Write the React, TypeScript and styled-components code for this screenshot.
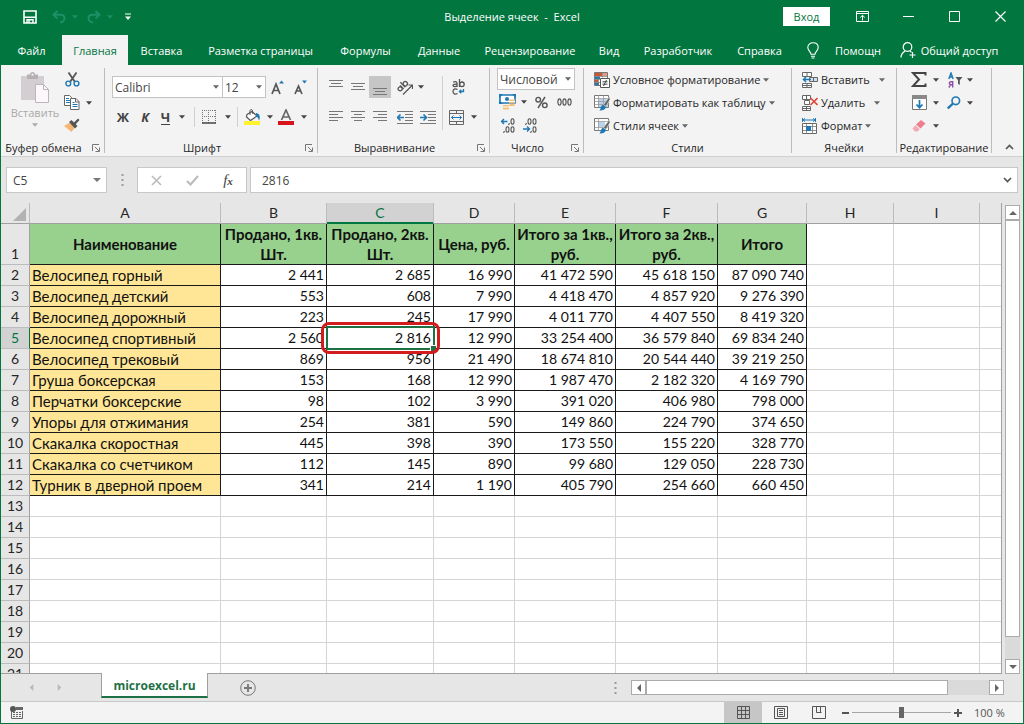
import React from "react";
import styled, { createGlobalStyle, css } from "styled-components";

const green = "#02763f";
const ink = "#262626";
const grey = "#666666";
const blue = "#1e78b4";
const uiFont = '"Open Sans", "Noto Sans", sans-serif';
const cellFont = 'Lato, "Open Sans", sans-serif';

const GlobalStyle = createGlobalStyle`
  *, *::before, *::after { box-sizing: border-box; }
  body { margin: 0; background: #e6e6e6; font-family: ${uiFont}; font-size: 11px; color: ${ink}; }
  button, input, select { font: inherit; color: inherit; margin: 0; }
  svg { display: block; flex: none; }
`;

const Window = styled.div`
  display: flex;
  flex-direction: column;
  height: 100vh;
  border: 1px solid ${green};
  border-top: 0;
  overflow: hidden;
`;

const PlainButton = styled.button`
  display: flex;
  align-items: center;
  justify-content: center;
  flex: none;
  padding: 0;
  border: 0;
  background: none;
  white-space: nowrap;
`;

/* ---------- title bar ---------- */

const TitleBar = styled.header`
  display: grid;
  grid-template-columns: 1fr auto 1fr;
  align-items: center;
  flex: none;
  height: 35px;
  padding-bottom: 2px;
  background: ${green};
  color: #fff;
`;

const QuickAccess = styled.div`
  display: flex;
  align-items: center;
  padding-left: 18px;
  color: #1b9165;
`;

const QuickButton = styled(PlainButton)<{ $w: number; $on?: boolean }>`
  width: ${(p) => p.$w}px;
  height: 24px;
  gap: 6px;
  color: ${(p) => (p.$on ? "#fff" : "inherit")};
`;

const Title = styled.h1`
  margin: 0;
  font-size: 11px;
  font-weight: 400;
  white-space: pre;
`;

const WindowControls = styled.div`
  display: flex;
  align-items: center;
  justify-content: flex-end;
`;

const SignIn = styled(PlainButton)`
  width: 47px;
  height: 19px;
  margin-right: 9px;
  background: #fff;
  color: ${green};
`;

const WindowButton = styled(PlainButton)`
  width: 46px;
  height: 30px;
  color: #fff;
`;

/* ---------- ribbon tabs ---------- */

const TabBar = styled.nav`
  display: flex;
  flex: none;
  height: 30px;
  background: ${green};
  color: #fff;
`;

const RibbonTab = styled(PlainButton)<{ $w: number; $gap?: number; $active?: boolean }>`
  width: ${(p) => p.$w}px;
  gap: ${(p) => p.$gap || 0}px;
  ${(p) =>
    p.$active &&
    css`
      background: #f3f3f3;
      color: ${green};
    `}
`;

/* ---------- ribbon ---------- */

const Ribbon = styled.section`
  display: flex;
  flex: none;
  height: 92px;
  background: #f3f3f3;
  border-bottom: 1px solid #d0d0d0;
`;

const Group = styled.div<{ $w: number }>`
  position: relative;
  display: flex;
  flex-direction: column;
  flex: none;
  width: ${(p) => p.$w}px;
  padding-top: 3px;
  &::after {
    content: "";
    position: absolute;
    top: 3px;
    right: 0;
    bottom: 3px;
    width: 1px;
    background: #bdbdbd;
  }
`;

const GroupBody = styled.div<{ $pad?: string }>`
  display: flex;
  height: 72px;
  padding: ${(p) => p.$pad || "0"};
`;

const GroupLabel = styled.div<{ $launcher?: boolean }>`
  display: flex;
  align-items: center;
  gap: 6px;
  height: 16px;
  padding-right: ${(p) => (p.$launcher ? 5 : 1)}px;
  line-height: 16px;
  white-space: nowrap;
  span {
    flex: 1;
    text-align: center;
  }
`;

const Stack = styled.div<{ $gap?: number; $pad?: string }>`
  display: flex;
  flex-direction: column;
  gap: ${(p) => p.$gap || 0}px;
  padding: ${(p) => p.$pad || "0"};
`;

const Row = styled.div<{ $h?: number }>`
  display: flex;
  align-items: center;
  height: ${(p) => p.$h || 22}px;
`;

const Tool = styled(PlainButton)<{ $w: number; $pressed?: boolean; $gap?: number }>`
  width: ${(p) => p.$w}px;
  height: 22px;
  gap: ${(p) => p.$gap ?? 6}px;
  color: #444;
  background: ${(p) => (p.$pressed ? "#c6c6c6" : "none")};
`;

const Letter = styled.span<{ $kind: "bold" | "italic" | "under" }>`
  font-size: 13px;
  font-weight: 700;
  line-height: 14px;
  font-style: ${(p) => (p.$kind === "italic" ? "italic" : "normal")};
  border-bottom: ${(p) => (p.$kind === "under" ? "1px solid #444" : "0")};
`;

const Rule = styled.div<{ $h: number; $w: number }>`
  flex: none;
  width: ${(p) => p.$w}px;
  height: ${(p) => p.$h}px;
  background: linear-gradient(#d0d0d0, #d0d0d0) center / 1px 100% no-repeat;
`;

const PasteButton = styled(PlainButton)`
  flex-direction: column;
  justify-content: flex-start;
  width: 48px;
  height: 72px;
  padding-top: 4px;
  gap: 2px;
  color: #a9a9a9;
  line-height: 16px;
`;

const TextTool = styled(PlainButton)<{ $gap?: number }>`
  justify-content: flex-start;
  height: 23px;
  color: ${ink};
  svg:first-child {
    margin-right: 3px;
  }
  svg:last-child {
    margin-left: ${(p) => p.$gap || 3}px;
    color: ${grey};
  }
`;

const Combo = styled.label<{ $w: number }>`
  position: relative;
  display: block;
  flex: none;
  width: ${(p) => p.$w}px;
  height: 22px;
  & + & {
    margin-left: -1px;
  }
  svg {
    position: absolute;
    top: 9px;
    right: 4px;
    pointer-events: none;
    color: ${grey};
  }
`;

const ComboSelect = styled.select`
  width: 100%;
  height: 100%;
  padding: 0 2px;
  border: 1px solid #c3c3c3;
  border-radius: 0;
  background: #fff;
  color: #444;
  font-size: 12px;
  appearance: none;
`;

const CollapseButton = styled(PlainButton)`
  align-self: flex-end;
  width: 20px;
  height: 18px;
  margin-left: auto;
  margin-right: 4px;
  color: ${grey};
`;

/* ---------- formula bar ---------- */

const FormulaBar = styled.div`
  display: flex;
  align-items: center;
  flex: none;
  height: 46px;
  padding: 0 5px;
  background: #e6e6e6;
`;

const Field = styled.div<{ $w?: number }>`
  display: flex;
  align-items: center;
  height: 26px;
  border: 1px solid #c8c8c8;
  background: #fff;
  color: #777;
  padding-right: 5px;
  ${(p) => (p.$w ? `flex: none; width: ${p.$w}px;` : "flex: 1; min-width: 0;")}
`;

const FieldInput = styled.input<{ $pad: number }>`
  flex: 1;
  min-width: 0;
  height: 100%;
  padding: 0 0 0 ${(p) => p.$pad}px;
  border: 0;
  outline: 0;
  background: none;
  color: #444;
  font-size: 12px;
`;

const FormulaButtons = styled.div`
  display: flex;
  align-items: center;
  flex: none;
  width: 110px;
  height: 26px;
  margin-right: 3px;
  border: 1px solid #c8c8c8;
  background: #fff;
`;

const FormulaButton = styled(PlainButton)`
  width: 36px;
  height: 24px;
  color: #bdbdbd;
`;

const FxGlyph = styled.span`
  color: #444;
  font: italic 15px/20px "Liberation Serif", serif;
  small {
    font-size: 11px;
    font-weight: 700;
  }
`;

const Grip = styled.div<{ $w: number }>`
  display: flex;
  justify-content: center;
  flex: none;
  width: ${(p) => p.$w}px;
  color: #999;
`;

/* ---------- worksheet ---------- */

const SheetArea = styled.main`
  display: flex;
  flex: 1;
  min-height: 0;
`;

const SheetView = styled.div`
  flex: 1;
  min-width: 0;
  overflow: hidden;
  background: #fff;
  border-right: 1px solid #a0a0a0;
  border-bottom: 1px solid #a0a0a0;
`;

const Grid = styled.table`
  width: 100%;
  table-layout: fixed;
  border-collapse: separate;
  border-spacing: 0;
  font-family: ${cellFont};
  font-size: 14px;
  line-height: 20px;
  color: #111;
`;

const Col = styled.col<{ $w?: number }>`
  width: ${(p) => (p.$w ? `${p.$w}px` : "auto")};
`;

const ColumnHead = styled.th<{ $selected?: boolean }>`
  height: 21px;
  padding: 0;
  font-weight: 400;
  background: ${(p) => (p.$selected ? "#d2d2d2" : "#e6e6e6")};
  color: ${(p) => (p.$selected ? green : ink)};
  border-right: 1px solid #bcbcbc;
  border-bottom: 1px solid ${(p) => (p.$selected ? green : "#a0a0a0")};
  box-shadow: ${(p) => (p.$selected ? `inset 0 -1px ${green}` : "none")};
  &:last-child {
    border-right: 0;
  }
`;

const Corner = styled(ColumnHead)`
  svg {
    margin-left: 12px;
    margin-top: 2px;
  }
`;

const RowHead = styled.th<{ $selected?: boolean }>`
  padding: 0;
  font-weight: 400;
  vertical-align: bottom;
  background: ${(p) => (p.$selected ? "#d2d2d2" : "#e6e6e6")};
  color: ${(p) => (p.$selected ? green : ink)};
  border-right: 1px solid ${(p) => (p.$selected ? green : "#a0a0a0")};
  border-bottom: 1px solid #bcbcbc;
`;

const SheetRow = styled.tr<{ $h: number }>`
  height: ${(p) => p.$h}px;
`;

const Cell = styled.td<{ $kind?: "head" | "name" | "value" }>`
  position: relative;
  padding: 0 2px;
  border-right: 1px solid #d4d4d4;
  border-bottom: 1px solid #d4d4d4;
  white-space: nowrap;
  ${(p) =>
    p.$kind &&
    css`
      border-color: #1a1a1a;
      text-align: right;
    `}
  ${(p) =>
    p.$kind === "head" &&
    css`
      padding: 0;
      background: #97d18d;
      font-size: 15px;
      font-weight: 700;
      text-align: center;
      white-space: pre;
    `}
  ${(p) =>
    p.$kind === "name" &&
    css`
      background: #ffe697;
      font-size: 15px;
      text-align: left;
    `}
  &:last-child {
    border-right: 0;
  }
`;

const Selection = styled.div`
  position: absolute;
  z-index: 1;
  inset: -2px -2px -2px -1px;
  border: 2px solid #1e7145;
  &::after {
    content: "";
    position: absolute;
    right: -3px;
    bottom: -3px;
    width: 6px;
    height: 6px;
    background: #1e7145;
    border: solid #fff;
    border-width: 1px 0 0 1px;
  }
`;

const Highlight = styled.div`
  position: absolute;
  z-index: 2;
  inset: -6px -7px -6px -6px;
  border: 3px solid #d21c1e;
  border-radius: 8px;
`;

/* ---------- scroll bars ---------- */

const VerticalBar = styled.div`
  display: flex;
  flex-direction: column;
  flex: none;
  width: 21px;
  padding: 2px 3px 0;
`;

const ScrollButton = styled(PlainButton)`
  width: 15px;
  height: 15px;
  border: 1px solid #ababab;
  background: #fff;
  color: ${grey};
`;

const Track = styled.div<{ $vertical?: boolean }>`
  display: flex;
  flex: 1;
  min-height: 0;
  min-width: 0;
  background: #dadada;
  flex-direction: ${(p) => (p.$vertical ? "column" : "row")};
`;

const Thumb = styled.div<{ $share: number }>`
  flex: 0 0 ${(p) => p.$share}%;
  border: 1px solid #ababab;
  background: #fff;
`;

const HorizontalBar = styled.div`
  display: flex;
  width: 373px;
  height: 15px;
  margin: 0 19px 0 9px;
`;

/* ---------- bottom bars ---------- */

const SheetTabs = styled.div`
  display: flex;
  align-items: center;
  flex: none;
  height: 27px;
  padding-left: 16px;
`;

const NavButton = styled(PlainButton)`
  width: 28px;
  height: 26px;
  color: #b8b8b8;
`;

const SheetTab = styled(PlainButton)`
  align-self: flex-start;
  width: 107px;
  height: 25px;
  margin: -1px 0 0 28px;
  padding-top: 2px;
  border: solid #a0a0a0;
  border-width: 0 1px;
  border-bottom: 2px solid #1e7145;
  background: #fff;
  color: #1e7145;
  font-size: 12px;
  font-weight: 700;
`;

const AddSheet = styled(PlainButton)`
  width: 24px;
  height: 24px;
  margin: 0 auto 0 28px;
  color: #777;
`;

const StatusBar = styled.footer`
  display: flex;
  align-items: center;
  flex: none;
  height: 22px;
  padding-left: 8px;
  border-top: 1px solid #c8c8c8;
  background: #f3f3f3;
  color: #555;
`;

const MacroButton = styled(PlainButton)`
  width: 14px;
  height: 21px;
  margin-right: auto;
`;

const ViewButton = styled(PlainButton)<{ $active?: boolean }>`
  width: 38px;
  height: 21px;
  background: ${(p) => (p.$active ? "#c6c6c6" : "none")};
`;

const ZoomStep = styled(PlainButton)`
  width: 14px;
  height: 21px;
`;

const ZoomRange = styled.input`
  width: 99px;
  height: 20px;
  background: linear-gradient(#a6a6a6, #a6a6a6) center / 100% 1px no-repeat;
  appearance: none;
  &::-webkit-slider-thumb {
    appearance: none;
    width: 5px;
    height: 11px;
    background: #666;
  }
`;

const ZoomValue = styled.output`
  width: 58px;
  padding-left: 9px;
  white-space: nowrap;
`;

/* ---------- icons ---------- */

const Caret = () => (
  <svg width="6" height="4" viewBox="0 0 6 4" aria-hidden="true">
    <path d="M0 .2h6L3 3.700z" fill="currentColor" />
  </svg>
);

const Arrow = ({ dir, size = 8 }: { dir: number; size?: number }) => (
  <svg width={size} height={size} viewBox="0 0 8 8" aria-hidden="true">
    <path d="M0 6h8L4 2z" fill="currentColor" transform={`rotate(${dir} 4 4)`} />
  </svg>
);

const Lines = ({ rows, w = 14, h = 14 }: { rows: number[][]; w?: number; h?: number }) => (
  <svg width={w} height={h} viewBox={`0 0 ${w} ${h}`} aria-hidden="true">
    {rows.map(([x1, x2, y]) => (
      <path key={`${x1}-${y}`} d={`M${x1} ${y}.5H${x2}`} stroke="#777" />
    ))}
  </svg>
);

const SaveIcon = () => (
  <svg width="14" height="14" viewBox="0 0 14 14" fill="none" stroke="#fff" strokeWidth="1.6">
    <path d="M1 1h12v12H1zM1 7.200h12" />
    <path d="M4 13v-3.200h6V13M6 10v3" strokeWidth="1.4" />
  </svg>
);

const UndoIcon = ({ flip }: { flip?: boolean }) => (
  <svg width="14" height="14" viewBox="0 0 14 14" fill="none" stroke="currentColor" strokeWidth="2">
    <g transform={flip ? "translate(14 0) scale(-1 1)" : undefined}>
      <path d="M5.500 1L1.500 4.800l4 3.800M2 4.800h6.500c2.600 0 4 1.500 4 3.500s-1.700 4-4.500 4.200" />
    </g>
  </svg>
);

const CustomizeIcon = () => (
  <svg width="6" height="8" viewBox="0 0 6 8">
    <path d="M0 1h6" stroke="#fff" />
    <path d="M0 3.500h6L3 7z" fill="#fff" />
  </svg>
);

const RibbonOptionsIcon = () => (
  <svg width="13" height="11" viewBox="0 0 13 11" fill="none" stroke="#fff">
    <path d="M.5.500h12v10H.5zM.5 2.500h12M6.500 9.500v-5M4.200 6.500l2.300-2.200 2.300 2.200" />
  </svg>
);

const BulbIcon = () => (
  <svg width="12" height="17" viewBox="0 0 12 17" fill="none" stroke="#fff" strokeWidth="1.100">
    <path d="M4 12.200c0-2.400-3.200-3.600-3.200-6.600C.8 2.700 3 .8 6 .8s5.200 1.900 5.200 4.800c0 3-3.200 4.200-3.200 6.600zM4 14.200h4M4.500 16h3" />
  </svg>
);

const ShareIcon = () => (
  <svg width="16" height="16" viewBox="0 0 16 16" fill="none" stroke="#fff" strokeWidth="1.200">
    <circle cx="7.500" cy="5" r="4.300" />
    <path d="M1 15.500c0-3 1.500-5 4.200-6.400M9.800 9.100l1.700 1.200M12.500 10v6M9.500 13h6" />
  </svg>
);

const PasteIcon = () => (
  <svg width="28" height="31" viewBox="0 0 28 31">
    <path d="M0 4h23v24H0z" fill="#d3ced2" />
    <path d="M6 2.500h3C9 1 10 0 11.500 0S14 1 14 2.500h3V7H6z" fill="#b4b0b3" />
    <circle cx="11.500" cy="2.700" r="1.100" fill="#f3f3f3" />
    <path d="M14.500 12.500h8l5 5v13h-13z" fill="#fbf7fb" stroke="#bcb6bb" />
    <path d="M22.500 12.500v5h5" fill="none" stroke="#bcb6bb" />
  </svg>
);

const CutIcon = () => (
  <svg width="15" height="15" viewBox="0 0 15 15" fill="none">
    <path d="M3.500.5l6.500 9.500M11.500.5L5 10" stroke="#555" strokeWidth="1.800" />
    <circle cx="3.300" cy="11.500" r="2.400" stroke={blue} strokeWidth="1.400" />
    <circle cx="11.500" cy="11.500" r="2.400" stroke={blue} strokeWidth="1.400" />
  </svg>
);

const CopyIcon = () => (
  <svg width="16" height="15" viewBox="0 0 16 15">
    <path d="M.5.500h5l2 2v8h-7z" fill="#fff" stroke="#666" />
    <path d="M2 3.500h3M2 5.500h4M2 7.500h4" stroke={blue} />
    <path d="M6.500 3.500h5.500l3 3v8H6.500z" fill="#fff" stroke="#666" />
    <path d="M11.500 3.500v3.500H15" fill="none" stroke="#666" />
    <path d="M8.500 7.500h2M8.500 9.500h5M8.500 11.500h5" stroke={blue} />
  </svg>
);

const BrushIcon = () => (
  <svg width="16" height="15" viewBox="0 0 16 15">
    <path d="M0 8l6-3.500 5 5L7.500 14z" fill="#f3b873" />
    <path d="M5 4l2.500-2 6 6L11 10.500z" fill="#555" />
    <path d="M9 5.500L14 .5l1.500 1.500L11 7z" fill="#555" />
  </svg>
);

const FontSizeIcon = ({ grow }: { grow?: boolean }) => (
  <svg width="14" height="16" viewBox="0 0 14 16" fill="none">
    <path d={grow ? "M1 15L5 5l4 10M2.500 11.500h5" : "M1 15l3.500-8L8 15M2.200 12h4.600"} stroke="#555" strokeWidth="1.700" />
    <path d={grow ? "M8 4.500h5L10.500 1.500z" : "M8 1.500h5l-2.500 3z"} fill={blue} />
  </svg>
);

const BordersIcon = () => (
  <svg width="14" height="14" viewBox="0 0 14 14" fill="none" stroke="#777">
    <path d="M0 .5h14M0 6.500h14M.5 0v13M6.500 0v13M13.500 0v13" strokeDasharray="1 1" />
    <path d="M0 13h14" stroke="#444" strokeWidth="1.500" />
  </svg>
);

const FillIcon = () => (
  <svg width="16" height="16" viewBox="0 0 16 16" fill="none">
    <path d="M3 5.500L8 2.500l5 4.500-6.500 4.500-4-3.500z" fill="#fff" stroke="#555" strokeWidth="1.200" />
    <path d="M6 6V1.500C6.300.2 8.500.2 8.500 1.800v3" stroke="#555" />
    <path d="M12 4c3.500.5 4.500 3 3.200 7.500-1-2.500-1.700-3.500-3.200-4.500z" fill={blue} />
    <path d="M0 12h16v4H0z" fill="#fdf22c" />
  </svg>
);

const FontColorIcon = () => (
  <svg width="16" height="16" viewBox="0 0 16 16" fill="none">
    <path d="M3.500 11L8 1l4.500 10M5 8h6" stroke="#666" strokeWidth="1.700" />
    <path d="M0 12h16v4H0z" fill="#d8121a" />
  </svg>
);

const OrientIcon = () => (
  <svg width="16" height="16" viewBox="0 0 16 16" fill="none" stroke="#555">
    <g transform="rotate(-45 6 7)" strokeWidth="1.300">
      <circle cx="2" cy="7" r="2" />
      <path d="M4.300 4.500v5M6.800 2.500v7" />
      <circle cx="9.200" cy="7" r="2.200" />
    </g>
    <path d="M6 15.500l9-9M11.500 6H15.500v4" strokeWidth="1.200" />
  </svg>
);

const WrapIcon = () => (
  <svg width="13" height="16" viewBox="0 0 13 16" fill="none" stroke="#555" strokeWidth="1.300">
    <path d="M1.200 3.200c1.500-1 3.800-.7 3.800 1V8M5 5.200C2.500 5 1 5.500 1 6.600S3.800 8 5 6.700" />
    <path d="M7.500 0v8" />
    <circle cx="9.900" cy="5.300" r="2.300" />
    <path d="M5.500 10.500C3 9.200 1 10.200 1 12.500s2 3.200 4.500 2" />
    <path d="M11.500 10v2.500H7.500M9.200 10.800l-1.800 1.700 1.800 1.700" stroke={blue} />
  </svg>
);

const IndentIcon = ({ right }: { right?: boolean }) => (
  <svg width="16" height="13" viewBox="0 0 16 13" fill="none">
    <path d="M0 .5h16M8 3.500h8M8 6.500h8M8 9.500h8M0 12.500h16" stroke="#777" />
    <path d={right ? "M0 6.500h6M3.500 3.500l3 3-3 3" : "M7 6.500H1M3.500 3.500l-3 3 3 3"} stroke={blue} strokeWidth="1.600" />
  </svg>
);

const MergeIcon = () => (
  <svg width="15" height="15" viewBox="0 0 15 15" fill="none" stroke="#666">
    <path d="M.5.500h14v14H.5zM.5 3.500h14M.5 11.500h14M7.500.5v3M7.500 11.500v3" />
    <path d="M2.500 7.500h10M4.500 5.500l-2 2 2 2M10.500 5.500l2 2-2 2" stroke={blue} />
  </svg>
);

const CurrencyIcon = () => (
  <svg width="17" height="16" viewBox="0 0 17 16">
    <path d="M1 1h15v8H1z" fill="#fff" stroke={blue} strokeWidth="1.600" />
    <path d="M0 0h4L0 4zM17 0h-4l4 4zM0 10h4L0 6z" fill={blue} />
    <circle cx="8" cy="5" r="2" fill={blue} />
    <path d="M10 5.500h6v4h-6zM4 11h6v4.500H4zM10.500 10h5v2h-5z" fill="#f3c07c" />
    <path d="M10 7.500h6M4 13h6" stroke="#fff" />
  </svg>
);

const PercentIcon = () => (
  <svg width="13" height="13" viewBox="0 0 13 13" fill="none" stroke="#555" strokeWidth="1.400">
    <circle cx="3.200" cy="3.700" r="2.300" />
    <circle cx="9.800" cy="9.300" r="2.300" />
    <path d="M10 1L3 12" />
  </svg>
);

const ThousandsIcon = () => (
  <svg width="15" height="9" viewBox="0 0 15 9" fill="none" stroke="#555" strokeWidth="1.200">
    <ellipse cx="2.500" cy="4" rx="1.600" ry="3.200" />
    <ellipse cx="7.500" cy="4" rx="1.600" ry="3.200" />
    <ellipse cx="12.500" cy="4" rx="1.600" ry="3.200" />
  </svg>
);

const DecimalIcon = ({ less }: { less?: boolean }) => (
  <svg width="15" height="15" viewBox="0 0 15 15" fill="none" stroke="#555" strokeWidth="1.100">
    {less ? (
      <g>
        <ellipse cx="6.500" cy="3.500" rx="1.500" ry="2.700" />
        <ellipse cx="11.500" cy="3.500" rx="1.500" ry="2.700" />
        <ellipse cx="11.500" cy="11.500" rx="1.500" ry="2.700" />
        <path d="M3.500 5l-1 2M8.500 13l-1 2" />
        <path d="M0 11h6M4 8.500L6.500 11 4 13.500" stroke={blue} strokeWidth="1.400" />
      </g>
    ) : (
      <g>
        <ellipse cx="11.500" cy="3.500" rx="1.500" ry="2.700" />
        <ellipse cx="6.500" cy="11.500" rx="1.500" ry="2.700" />
        <ellipse cx="11.500" cy="11.500" rx="1.500" ry="2.700" />
        <path d="M8.500 5l-1 2M3.500 13l-1 2" />
        <path d="M6.500 3.500h-6M3 1L.5 3.500 3 6" stroke={blue} strokeWidth="1.400" />
      </g>
    )}
  </svg>
);

const ConditionalIcon = () => (
  <svg width="16" height="16" viewBox="0 0 16 16" fill="none">
    <path d="M.5.500h13v13H.5z" fill="#fff" stroke="#777" />
    <path d="M1 1h7v3H1zM1 7.500h3v2.500H1z" fill="#d2532c" />
    <path d="M9 1h4v3H9z" fill="#d2532c" opacity=".6" />
    <path d="M1 4.500h5v2.500H1zM1 10.500h4V13H1z" fill={blue} />
    <path d="M.5 4.500h13M.5 7.500h13M.5 10.500h6M4.500.5v13M8.500.5v5" stroke="#777" strokeWidth=".7" />
    <path d="M6.500 6.500h9v9h-9z" fill="#fff" stroke="#555" />
    <path d="M8.500 9.800h5M8.500 12.200h5M12.500 8l-3 6" stroke="#444" />
  </svg>
);

const StyleIcon = ({ table }: { table?: boolean }) => (
  <svg width="16" height="16" viewBox="0 0 16 16" fill="none">
    <path d="M.5.500h14v12H.5z" fill="#fff" stroke="#777" />
    <path d={table ? "M4 4h10v8H4z" : "M4 4h7v5H4z"} fill="#b9d4ea" />
    <path
      d={table ? "M.5 3.500h14M.5 6.500h14M.5 9.500h14M4.500.5v12M9.500.5v12" : "M.5 3.500h14M.5 9.500h14M4.500.5v12"}
      stroke="#999"
      strokeWidth=".8"
    />
    <path d="M15.500 1.500l-6 8 2.500 2 4-7z" fill="#666" stroke="#f3f3f3" strokeWidth=".6" />
    <path d="M9 9.500l3 2.500c-1 3-3.500 3.700-6.500 3.500 1.500-1.500 1-4.500 3.500-6z" fill={blue} />
  </svg>
);

const InsertCellsIcon = () => (
  <svg width="16" height="16" viewBox="0 0 16 16" fill="none" stroke="#666">
    <path d="M.5.500h9v4h-9zM5 .5v4M.5 11.500h9v4h-9zM5 11.500v4M.5 13.500h9" fill="#fff" />
    <path d="M7.500 5.500h8v4h-8zM11.500 5.500v4" fill="#cfe1ef" />
    <path d="M9 7.500H1.500M4 5L1.500 7.500 4 10" stroke={blue} strokeWidth="1.500" />
  </svg>
);

const DeleteCellsIcon = () => (
  <svg width="16" height="16" viewBox="0 0 16 16" fill="none" stroke="#666">
    <path d="M.5.500h8v4h-8zM4.500.5v4M.5 11.500h8v4h-8zM4.500 11.500v4M.5 13.500h8" fill="#fff" />
    <path d="M2.500 5.500h5v4h-5z" fill="#fff" />
    <path d="M8.500 3l7 7M15.500 3l-7 7" stroke="#e0493a" strokeWidth="1.600" />
  </svg>
);

const FormatCellsIcon = () => (
  <svg width="16" height="16" viewBox="0 0 16 16" fill="none">
    <path d="M.5 0v4M13.500 0v4M1 2h12M3 .5L1 2l2 1.500M11 .5L13 2l-2 1.500" stroke={blue} />
    <path d="M.5 5.500h14v10H.5z" fill="#fff" stroke="#666" />
    <path d="M.5 8.500h14M.5 12.500h14M4.500 5.500v10M10.500 5.500v10" stroke="#777" strokeWidth=".8" />
    <path d="M4 8h5v5H4z" fill={blue} />
  </svg>
);

const SumIcon = () => (
  <svg width="16" height="15" viewBox="0 0 16 15" fill="none" stroke="#444" strokeWidth="2">
    <path d="M14.500 3.500V1H2l6 6.500L2 14h12.500v-2.500" />
  </svg>
);

const SortIcon = () => (
  <svg width="15" height="16" viewBox="0 0 15 16" fill="none" strokeWidth="1.400">
    <path d="M.8 7L3 1l2.200 6M1.400 5h3.200" stroke={blue} />
    <path d="M4.700 15.500V9.700H3c-2.200 0-2.200 3 0 3h1.700M2.800 12.700l-2 2.800" stroke="#8b4fa8" />
    <path d="M7.500 5h7l-2.700 3.200V13l-1.800-1.200V8.200z" fill="#555" />
  </svg>
);

const FillDownIcon = () => (
  <svg width="15" height="15" viewBox="0 0 15 15" fill="none">
    <path d="M.5.500h14v14H.5z" fill="#fff" stroke="#777" />
    <path d="M0 0h15v4H0z" fill="#888" />
    <path d="M7.500 5v8M4.500 9.500l3 3.200 3-3.200" stroke={blue} strokeWidth="1.700" />
  </svg>
);

const FindIcon = () => (
  <svg width="14" height="14" viewBox="0 0 14 14" fill="none" stroke={blue}>
    <circle cx="8.800" cy="4.800" r="3.800" strokeWidth="1.600" />
    <path d="M6 7.500L.8 12.500" strokeWidth="2.400" />
  </svg>
);

const EraserIcon = () => (
  <svg width="14" height="12" viewBox="0 0 14 12">
    <path d="M9 0l4.500 3.500-5 5L4 4.500z" fill="#ef7d8e" />
    <path d="M3.300 5.200l4.500 4L5.500 11.500H3L.5 8.500z" fill="#f5a8b3" />
  </svg>
);

const Chevron = ({ up }: { up?: boolean }) => (
  <svg width="9" height="6" viewBox="0 0 9 6" fill="none" stroke="#555" strokeWidth="1.700">
    <path d={up ? "M1 5l3.500-3.500L8 5" : "M1 1l3.500 3.500L8 1"} />
  </svg>
);

const Dots = () => (
  <svg width="3" height="14" viewBox="0 0 3 14" fill="currentColor">
    <path d="M.5 1h2v2h-2zM.5 6h2v2h-2zM.5 11h2v2h-2z" />
  </svg>
);

const Launcher = () => (
  <PlainButton aria-label="Параметры">
    <svg width="8" height="8" viewBox="0 0 8 8" fill="none" stroke="#777">
      <path d="M.5 7V.5H7M3 3l4 4M7.500 3.500v4h-4" />
    </svg>
  </PlainButton>
);

/* ---------- data ---------- */

const tabs: [string, number][] = [
  ["Вставка", 67],
  ["Разметка страницы", 131],
  ["Формулы", 79],
  ["Данные", 68],
  ["Рецензирование", 114],
  ["Вид", 44],
  ["Разработчик", 94],
  ["Справка", 69],
];

const columns: [string, number?][] = [
  ["A", 191],
  ["B", 106],
  ["C", 107],
  ["D", 81],
  ["E", 101],
  ["F", 102],
  ["G", 89],
  ["H", 87],
  ["I", 86],
  [""],
];

const headings = [
  "Наименование",
  "Продано, 1кв.\nШт.",
  "Продано, 2кв.\nШт.",
  "Цена, руб.",
  "Итого за 1кв.,\nруб.",
  "Итого за 2кв.,\nруб.",
  "Итого",
];

const products = [
  ["Велосипед горный", "2 441", "2 685", "16 990", "41 472 590", "45 618 150", "87 090 740"],
  ["Велосипед детский", "553", "608", "7 990", "4 418 470", "4 857 920", "9 276 390"],
  ["Велосипед дорожный", "223", "245", "17 990", "4 011 770", "4 407 550", "8 419 320"],
  ["Велосипед спортивный", "2 560", "2 816", "12 990", "33 254 400", "36 579 840", "69 834 240"],
  ["Велосипед трековый", "869", "956", "21 490", "18 674 810", "20 544 440", "39 219 250"],
  ["Груша боксерская", "153", "168", "12 990", "1 987 470", "2 182 320", "4 169 790"],
  ["Перчатки боксерские", "98", "102", "3 990", "391 020", "406 980", "798 000"],
  ["Упоры для отжимания", "254", "381", "590", "149 860", "224 790", "374 650"],
  ["Скакалка скоростная", "445", "398", "390", "173 550", "155 220", "328 770"],
  ["Скакалка со счетчиком", "112", "145", "890", "99 680", "129 050", "228 730"],
  ["Турник в дверной проем", "341", "214", "1 190", "405 790", "254 660", "660 450"],
];

const emptyRows = [13, 14, 15, 16, 17, 18, 19, 20, 21];

/* ---------- page parts ---------- */

const ClipboardGroup = () => (
  <Group $w={104}>
    <GroupBody $pad="0 0 0 10px">
      <PasteButton>
        <PasteIcon />
        Вставить
        <Caret />
      </PasteButton>
      <Stack $pad="0 0 0 3px">
        <Row $h={23}><Tool $w={20} aria-label="Вырезать"><CutIcon /></Tool></Row>
        <Row $h={23}><Tool $w={32} $gap={6} aria-label="Копировать"><CopyIcon /><Caret /></Tool></Row>
        <Row $h={23}><Tool $w={20} aria-label="Формат по образцу"><BrushIcon /></Tool></Row>
      </Stack>
    </GroupBody>
    <GroupLabel $launcher><span>Буфер обмена</span><Launcher /></GroupLabel>
  </Group>
);

const FontGroup = () => (
  <Group $w={213}>
    <GroupBody $pad="8px 0 0 7px">
      <Stack $gap={8}>
        <Row>
          <Combo $w={111}>
            <ComboSelect aria-label="Шрифт"><option>Calibri</option></ComboSelect>
            <Caret />
          </Combo>
          <Combo $w={44}>
            <ComboSelect aria-label="Размер шрифта"><option>12</option></ComboSelect>
            <Caret />
          </Combo>
          <Tool $w={24} aria-label="Увеличить"><FontSizeIcon grow /></Tool>
          <Tool $w={22} aria-label="Уменьшить"><FontSizeIcon /></Tool>
        </Row>
        <Row>
          <Tool $w={22}><Letter $kind="bold">Ж</Letter></Tool>
          <Tool $w={22}><Letter $kind="italic">К</Letter></Tool>
          <Tool $w={34} $gap={9}><Letter $kind="under">Ч</Letter><Caret /></Tool>
          <Rule $h={20} $w={9} />
          <Tool $w={34} $gap={9} aria-label="Границы"><BordersIcon /><Caret /></Tool>
          <Rule $h={20} $w={8} />
          <Tool $w={34} $gap={7} aria-label="Цвет заливки"><FillIcon /><Caret /></Tool>
          <Tool $w={34} $gap={7} aria-label="Цвет текста"><FontColorIcon /><Caret /></Tool>
        </Row>
      </Stack>
    </GroupBody>
    <GroupLabel $launcher><span>Шрифт</span><Launcher /></GroupLabel>
  </Group>
);

const AlignmentGroup = () => (
  <Group $w={172}>
    <GroupBody $pad="8px 0 0 7px">
      <Stack $gap={8}>
        <Row>
          <Tool $w={22} aria-label="По верхнему краю"><Lines rows={[[0, 14, 0], [2, 12, 3], [0, 14, 6]]} /></Tool>
          <Tool $w={22} aria-label="По середине"><Lines rows={[[0, 14, 3], [2, 12, 6], [0, 14, 9]]} /></Tool>
          <Tool $w={22} $pressed aria-label="По нижнему краю"><Lines h={22} rows={[[0, 14, 12], [2, 12, 15], [0, 14, 18]]} /></Tool>
          <Tool $w={38} $gap={5} aria-label="Ориентация"><OrientIcon /><Caret /></Tool>
        </Row>
        <Row>
          <Tool $w={22} aria-label="По левому краю"><Lines rows={[[0, 14, 1], [0, 9, 4], [0, 14, 7], [0, 9, 10]]} /></Tool>
          <Tool $w={22} aria-label="По центру"><Lines rows={[[0, 14, 1], [3, 11, 4], [0, 14, 7], [3, 11, 10]]} /></Tool>
          <Tool $w={22} aria-label="По правому краю"><Lines rows={[[0, 14, 1], [5, 14, 4], [0, 14, 7], [5, 14, 10]]} /></Tool>
          <Tool $w={28} aria-label="Уменьшить отступ"><IndentIcon /></Tool>
          <Tool $w={18} aria-label="Увеличить отступ"><IndentIcon right /></Tool>
        </Row>
      </Stack>
      <Rule $h={54} $w={10} />
      <Stack $gap={8}>
        <Row><Tool $w={22} aria-label="Переносить текст"><WrapIcon /></Tool></Row>
        <Row><Tool $w={32} $gap={7} aria-label="Объединить"><MergeIcon /><Caret /></Tool></Row>
      </Stack>
    </GroupBody>
    <GroupLabel $launcher><span>Выравнивание</span><Launcher /></GroupLabel>
  </Group>
);

const NumberGroup = () => (
  <Group $w={94}>
    <GroupBody $pad="0 0 0 7px">
      <Stack $gap={1}>
        <Row>
          <Combo $w={78}>
            <ComboSelect aria-label="Числовой формат"><option>Числовой</option></ComboSelect>
            <Caret />
          </Combo>
        </Row>
        <Row>
          <Tool $w={32} $gap={5} aria-label="Финансовый формат"><CurrencyIcon /><Caret /></Tool>
          <Tool $w={25} aria-label="Процентный формат"><PercentIcon /></Tool>
          <Tool $w={20} aria-label="Формат с разделителями"><ThousandsIcon /></Tool>
        </Row>
        <Row>
          <Tool $w={22} aria-label="Увеличить разрядность"><DecimalIcon /></Tool>
          <Tool $w={22} aria-label="Уменьшить разрядность"><DecimalIcon less /></Tool>
        </Row>
      </Stack>
    </GroupBody>
    <GroupLabel $launcher><span>Число</span><Launcher /></GroupLabel>
  </Group>
);

const StylesGroup = () => (
  <Group $w={208}>
    <GroupBody $pad="0 0 0 10px">
      <Stack>
        <TextTool><ConditionalIcon />Условное форматирование<Caret /></TextTool>
        <TextTool><StyleIcon table />Форматировать как таблицу<Caret /></TextTool>
        <TextTool><StyleIcon />Стили ячеек<Caret /></TextTool>
      </Stack>
    </GroupBody>
    <GroupLabel><span>Стили</span></GroupLabel>
  </Group>
);

const CellsGroup = () => (
  <Group $w={105}>
    <GroupBody $pad="0 0 0 10px">
      <Stack>
        <TextTool $gap={9}><InsertCellsIcon />Вставить<Caret /></TextTool>
        <TextTool $gap={9}><DeleteCellsIcon />Удалить<Caret /></TextTool>
        <TextTool><FormatCellsIcon />Формат<Caret /></TextTool>
      </Stack>
    </GroupBody>
    <GroupLabel><span>Ячейки</span></GroupLabel>
  </Group>
);

const EditingGroup = () => (
  <Group $w={95}>
    <GroupBody $pad="0 0 0 12px">
      <Stack>
        <Row $h={23}>
          <Tool $w={32} aria-label="Сумма"><SumIcon /><Caret /></Tool>
          <Tool $w={38} $gap={4} aria-label="Сортировка и фильтр"><SortIcon /><Caret /></Tool>
        </Row>
        <Row $h={23}>
          <Tool $w={32} aria-label="Заполнить"><FillDownIcon /><Caret /></Tool>
          <Tool $w={38} aria-label="Найти"><FindIcon /><Caret /></Tool>
        </Row>
        <Row $h={23}><Tool $w={32} $gap={7} aria-label="Очистить"><EraserIcon /><Caret /></Tool></Row>
      </Stack>
    </GroupBody>
    <GroupLabel><span>Редактирование</span></GroupLabel>
  </Group>
);

const Worksheet = () => (
  <SheetView>
    <Grid>
      <colgroup>
        <Col $w={29} />
        {columns.map(([name, w], i) => <Col key={name || i} $w={w} />)}
      </colgroup>
      <thead>
        <tr>
          <Corner aria-label="Выделить все">
            <svg width="13" height="13" viewBox="0 0 13 13"><path d="M13 0v13H0z" fill="#b2b2b2" /></svg>
          </Corner>
          {columns.map(([name], i) => <ColumnHead key={name || i} $selected={name === "C"}>{name}</ColumnHead>)}
        </tr>
      </thead>
      <tbody>
        <SheetRow $h={41}>
          <RowHead>1</RowHead>
          {headings.map((text) => <Cell key={text} $kind="head">{text}</Cell>)}
          <Cell /><Cell /><Cell />
        </SheetRow>
        {products.map((row, r) => (
          <SheetRow key={row[0]} $h={21}>
            <RowHead $selected={r === 3}>{r + 2}</RowHead>
            {row.map((text, c) => (
              <Cell key={c} $kind={c === 0 ? "name" : "value"}>
                {text}
                {r === 3 && c === 2 && <><Selection /><Highlight /></>}
              </Cell>
            ))}
            <Cell /><Cell /><Cell />
          </SheetRow>
        ))}
        {emptyRows.map((n) => (
          <SheetRow key={n} $h={21}>
            <RowHead>{n}</RowHead>
            {columns.map((_, i) => <Cell key={i} />)}
          </SheetRow>
        ))}
      </tbody>
    </Grid>
  </SheetView>
);

export default function App() {
  return (
    <>
      <GlobalStyle />
      <Window>
        <TitleBar>
          <QuickAccess>
            <QuickButton $w={22} $on aria-label="Сохранить"><SaveIcon /></QuickButton>
            <QuickButton $w={47} aria-label="Отменить"><UndoIcon /><Caret /></QuickButton>
            <QuickButton $w={23} aria-label="Вернуть"><UndoIcon flip /><Caret /></QuickButton>
            <QuickButton $w={34} $on aria-label="Настройка панели"><CustomizeIcon /></QuickButton>
          </QuickAccess>
          <Title>{"Выделение ячеек  -  Excel"}</Title>
          <WindowControls>
            <SignIn>Вход</SignIn>
            <WindowButton aria-label="Параметры ленты"><RibbonOptionsIcon /></WindowButton>
            <WindowButton aria-label="Свернуть">
              <svg width="11" height="11" viewBox="0 0 11 11"><path d="M0 5.500h11" stroke="#fff" /></svg>
            </WindowButton>
            <WindowButton aria-label="Развернуть">
              <svg width="11" height="11" viewBox="0 0 11 11"><path d="M.5.500h10v10H.5z" fill="none" stroke="#fff" /></svg>
            </WindowButton>
            <WindowButton aria-label="Закрыть">
              <svg width="11" height="11" viewBox="0 0 11 11"><path d="M.5.500l10 10M10.500.5l-10 10" stroke="#fff" strokeWidth="1.200" /></svg>
            </WindowButton>
          </WindowControls>
        </TitleBar>
        <TabBar>
          <RibbonTab $w={61}>Файл</RibbonTab>
          <RibbonTab $w={66} $active>Главная</RibbonTab>
          {tabs.map(([name, w]) => <RibbonTab key={name} $w={w}>{name}</RibbonTab>)}
          <RibbonTab $w={100} $gap={16}><BulbIcon />Помощн</RibbonTab>
          <RibbonTab $w={110} $gap={5}><ShareIcon />Общий доступ</RibbonTab>
        </TabBar>
        <Ribbon>
          <ClipboardGroup />
          <FontGroup />
          <AlignmentGroup />
          <NumberGroup />
          <StylesGroup />
          <CellsGroup />
          <EditingGroup />
          <CollapseButton aria-label="Свернуть ленту"><Chevron up /></CollapseButton>
        </Ribbon>
        <FormulaBar>
          <Field $w={101}>
            <FieldInput $pad={6} aria-label="Имя" defaultValue="C5" />
            <Arrow dir={180} />
          </Field>
          <Grip $w={30}><Dots /></Grip>
          <FormulaButtons>
            <FormulaButton aria-label="Отмена">
              <svg width="11" height="11" viewBox="0 0 11 11"><path d="M1 1l9 9M10 1l-9 9" stroke="currentColor" strokeWidth="1.700" /></svg>
            </FormulaButton>
            <FormulaButton aria-label="Ввод">
              <svg width="13" height="11" viewBox="0 0 13 11"><path d="M1 6l3.500 3.500L12 1" fill="none" stroke="currentColor" strokeWidth="2.200" /></svg>
            </FormulaButton>
            <FormulaButton aria-label="Вставить функцию"><FxGlyph>f<small>x</small></FxGlyph></FormulaButton>
          </FormulaButtons>
          <Field>
            <FieldInput $pad={11} aria-label="Строка формул" defaultValue="2816" />
            <Chevron />
          </Field>
        </FormulaBar>
        <SheetArea>
          <Worksheet />
          <VerticalBar>
            <ScrollButton aria-label="Вверх"><Arrow dir={0} /></ScrollButton>
            <Track $vertical><Thumb $share={95} /></Track>
            <ScrollButton aria-label="Вниз"><Arrow dir={180} /></ScrollButton>
          </VerticalBar>
        </SheetArea>
        <SheetTabs>
          <NavButton aria-label="Предыдущий лист"><Arrow dir={-90} size={7} /></NavButton>
          <NavButton aria-label="Следующий лист"><Arrow dir={90} size={7} /></NavButton>
          <SheetTab>microexcel.ru</SheetTab>
          <AddSheet aria-label="Новый лист">
            <svg width="16" height="16" viewBox="0 0 16 16" fill="none" stroke="currentColor">
              <circle cx="8" cy="8" r="7.300" />
              <path d="M8 4v8M4 8h8" strokeWidth="1.800" />
            </svg>
          </AddSheet>
          <Grip $w={14}><Dots /></Grip>
          <HorizontalBar>
            <ScrollButton aria-label="Влево"><Arrow dir={-90} /></ScrollButton>
            <Track><Thumb $share={88} /></Track>
            <ScrollButton aria-label="Вправо"><Arrow dir={90} /></ScrollButton>
          </HorizontalBar>
        </SheetTabs>
        <StatusBar>
          <MacroButton aria-label="Запись макроса">
            <svg width="13" height="13" viewBox="0 0 13 13">
              <path d="M1.500 5v7.500h11V5" fill="none" stroke="#666" />
              <path d="M6 1h7v3H6z" fill="#666" />
              <path d="M3 6.500h8M3 8.500h8M3 10.500h8" stroke="#666" strokeDasharray="2 1" />
              <circle cx="3" cy="3" r="3" fill="#555" />
            </svg>
          </MacroButton>
          <ViewButton $active aria-label="Обычный">
            <svg width="13" height="13" viewBox="0 0 13 13" fill="none" stroke="#555"><path d="M.5.500h12v12H.5zM.5 4.500h12M.5 8.500h12M4.500.5v12M8.500.5v12" /></svg>
          </ViewButton>
          <ViewButton aria-label="Разметка страницы">
            <svg width="14" height="13" viewBox="0 0 14 13" fill="none" stroke="#555"><path d="M.5.500h13v12H.5zM3.500 2.500h7v8h-7zM5 4.500h4M5 6.500h4M5 8.500h4" /></svg>
          </ViewButton>
          <ViewButton aria-label="Страничный режим">
            <svg width="14" height="13" viewBox="0 0 14 13" fill="none" stroke="#555"><path d="M.5.500h13v12H.5zM4.500.5v6M8.500.5v6M4.500 6.500h5" /></svg>
          </ViewButton>
          <ZoomStep aria-label="Уменьшить масштаб">
            <svg width="7" height="8" viewBox="0 0 7 8"><path d="M0 4h7" stroke="#555" strokeWidth="2" /></svg>
          </ZoomStep>
          <ZoomRange type="range" min={0} max={100} defaultValue={50} aria-label="Масштаб" />
          <ZoomStep aria-label="Увеличить масштаб">
            <svg width="8" height="8" viewBox="0 0 8 8"><path d="M0 4h8M4 0v8" stroke="#555" strokeWidth="2" /></svg>
          </ZoomStep>
          <ZoomValue>100 %</ZoomValue>
        </StatusBar>
      </Window>
    </>
  );
}
